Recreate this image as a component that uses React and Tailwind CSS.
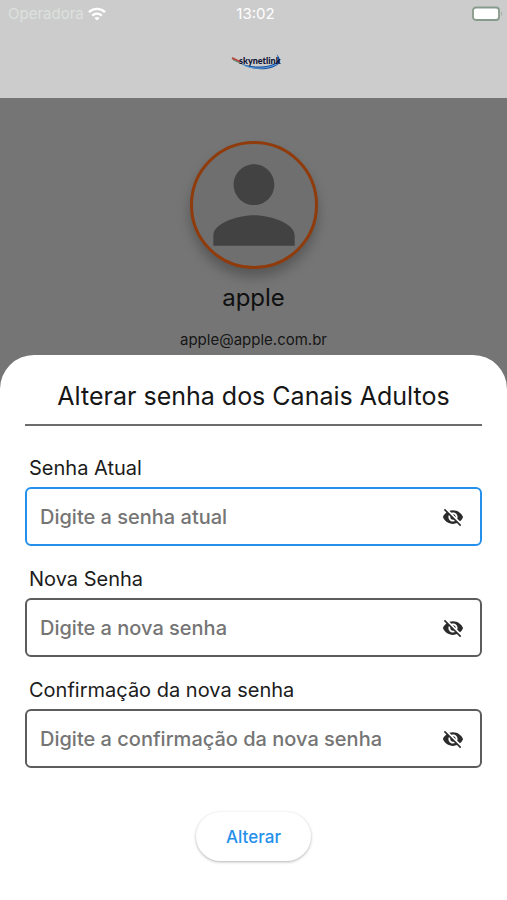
import { useState } from 'react'
import { MdPerson, MdVisibility, MdVisibilityOff } from 'react-icons/md'

const fields = [
  { id: 'current', label: 'Senha Atual', placeholder: 'Digite a senha atual', active: true },
  { id: 'next', label: 'Nova Senha', placeholder: 'Digite a nova senha' },
  { id: 'confirm', label: 'Confirmação da nova senha', placeholder: 'Digite a confirmação da nova senha' },
]

function WifiIcon() {
  return (
    <svg viewBox="0 0 18 14" className="w-[18px] h-[14px]" fill="none" stroke="white" strokeWidth="2.4">
      <path d="M1 5.2C5.4 .8 12.6 .8 17 5.2" />
      <path d="M4.2 8.6C7 6 11 6 13.8 8.6" />
      <path d="M9 13.6L6.4 11C7.8 9.6 10.2 9.6 11.6 11Z" fill="white" stroke="none" />
    </svg>
  )
}

function BatteryIcon() {
  return (
    <svg viewBox="0 0 31 16" className="w-[31px] h-4">
      <rect x="1" y="1.5" width="26" height="12.5" rx="3" fill="white" stroke="#879a8b" strokeWidth="1.8" />
      <path d="M29 5.2C30.6 6 30.6 9.4 29 10.2Z" fill="#a3b3a6" />
    </svg>
  )
}

function Logo() {
  return (
    <svg viewBox="0 0 50 18" className="w-[50px] h-[18px]" role="img" aria-label="skynetlink">
      <path d="M8 9.5C18 15 38 15 46 9C47.5 7 47 4 45.5 1C49 4.5 50 8.5 47.5 11C39 18.5 20 18 8 9.5Z" fill="#174f9e" />
      <path d="M13 12.5C23 16.5 36 16 46 11" fill="none" stroke="#5fa4dd" strokeWidth="1" />
      <path d="M1 5L9 9" stroke="#b5483f" strokeWidth="2" />
      <path d="M2 7L10 10.5" stroke="#5d9a86" strokeWidth="1" />
      <text x="8" y="11" fontFamily="Lato, sans-serif" fontWeight="900" fontSize="9" fill="#0b1233">skynetlink</text>
    </svg>
  )
}

function PasswordField({ id, label, placeholder, active }) {
  const [visible, setVisible] = useState(false)

  return (
    <div>
      <label htmlFor={id} className="block px-1 text-xl leading-6 text-[#1c1c1c]">{label}</label>
      <div className={`mt-[7px] flex items-center h-[59px] px-[13px] rounded-md border-2 bg-white ${active ? 'border-[#2490ec]' : 'border-[#5c5c5c]'}`}>
        <input
          id={id}
          type={visible ? 'text' : 'password'}
          placeholder={placeholder}
          className="flex-1 min-w-0 h-full text-xl font-medium outline-none placeholder:text-[#757575]"
        />
        <button type="button" aria-label="Mostrar senha" onClick={() => setVisible(!visible)} className="px-[3px] text-[#2b2b2b]">
          {visible ? <MdVisibility className="size-[22px]" /> : <MdVisibilityOff className="size-[22px]" />}
        </button>
      </div>
    </div>
  )
}

export default function App() {
  return (
    <main className="min-h-screen flex flex-col bg-[#757575] font-['Inter',sans-serif]">
      <header className="h-[98px] bg-[#cccccc]">
        <div className="grid grid-cols-3 items-center h-7 pl-2 pr-1 text-[15px] text-white">
          <div className="flex items-center gap-1">
            <span className="text-[#dde1de]">Operadora</span>
            <WifiIcon />
          </div>
          <span className="text-center">13:02</span>
          <div className="flex justify-end"><BatteryIcon /></div>
        </div>
        <div className="flex justify-center pt-[25px] pl-1"><Logo /></div>
      </header>

      <section className="flex flex-col items-center pt-[43px] pb-[5px]">
        <div className="size-32 rounded-full border-[3px] border-[#903b0b] bg-[#6f6f6f] text-[#424242] shadow-[0_8px_12px_rgba(0,0,0,0.25)]">
          <MdPerson className="size-full" />
        </div>
        <h1 className="mt-[13px] text-2xl leading-8 text-[#101010]">apple</h1>
        <p className="mt-4 text-[15px] leading-5 text-[#161616]">apple@apple.com.br</p>
      </section>

      <section className="flex-1 rounded-t-[34px] bg-white px-[25px] pt-[25px] pb-9">
        <h2 className="pb-3 border-b-2 border-[#6c6c6c] text-center text-[25px] leading-8 text-[#161616]">
          Alterar senha dos Canais Adultos
        </h2>
        <form onSubmit={e => e.preventDefault()}>
          <div className="mt-[30px] flex flex-col gap-[21px]">
            {fields.map(f => <PasswordField key={f.id} {...f} />)}
          </div>
          <div className="mt-11 flex justify-center">
            <button type="submit" className="h-[49px] px-[30px] pt-[2px] rounded-full bg-white text-[17px] font-medium text-[#2490ec] shadow-[0_1px_3px_rgba(0,0,0,0.3)]">
              Alterar
            </button>
          </div>
        </form>
      </section>
    </main>
  )
}
